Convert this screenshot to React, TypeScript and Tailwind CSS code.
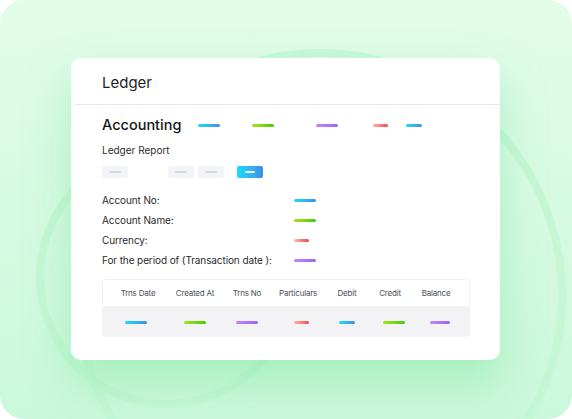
import React from "react";

const G = {
  blue: "bg-gradient-to-r from-[#19dcf7] to-[#3b8ee8]",
  green: "bg-gradient-to-r from-[#a8e21c] to-[#3dcc0c]",
  purple: "bg-gradient-to-r from-[#c783fd] to-[#9866f5]",
  red: "bg-gradient-to-r from-[#fdb3a2] to-[#f0405c]",
};

function Bar({ c, w }: { c: string; w: string }) {
  return <div className={`h-[3px] rounded-full ${c} ${w}`} />;
}

const headers: [string, string][] = [
  ["Trns Date", "w-[56px]"],
  ["Created At", "w-[58px]"],
  ["Trns No", "w-[46px]"],
  ["Particulars", "w-[56px]"],
  ["Debit", "w-[42px]"],
  ["Credit", "w-[44px]"],
  ["Balance", "w-[48px]"],
];

const body: [string, string, string][] = [
  ["w-[52px]", G.blue, "w-[22px]"],
  ["w-[66px]", G.green, "w-[22px]"],
  ["w-[38px]", G.purple, "w-[22px]"],
  ["w-[70px]", G.red, "w-[15px]"],
  ["w-[22px]", G.blue, "w-[16px]"],
  ["w-[72px]", G.green, "w-[22px]"],
  ["w-[20px]", G.purple, "w-[22px]"],
];

export default function App() {
  return (
    <div
      className="relative w-[572px] h-[419px] overflow-hidden rounded-[24px] bg-gradient-to-b from-[#e2fcea] to-[#cbf8da]"
      style={{ fontFamily: "Inter, 'Noto Sans', sans-serif" }}
    >
      {/* decorative rings */}
      <div className="absolute left-[74px] top-[49px] w-[492px] h-[492px] rounded-full border-[8px] border-[#c2f6d2]/80" />
      <div className="absolute left-[36px] top-[146px] w-[262px] h-[262px] rounded-full border-[8px] border-[#c2f6d2]/80" />
      <div className="relative pl-[71px] pt-[58px]">
        <div className="w-[429px] h-[302px] rounded-[10px] bg-white shadow-[0_22px_45px_rgba(90,220,130,0.35)] flex flex-col">
          <div className="h-[46px] flex items-center pl-[31px] pt-[4px] text-[15px] text-[#1f1f1f]">
            Ledger
          </div>
          <div className="ml-[4px] h-px bg-[#e6e7ea]" />
          <div className="pl-[31px] flex flex-col">
            <div className="mt-[8px] h-[24px] flex items-center">
              <div className="w-[96px] text-[14.5px] font-medium text-[#141414]">Accounting</div>
              <Bar c={G.blue} w="w-[22px]" />
              <div className="w-[32px]" />
              <Bar c={G.green} w="w-[22px]" />
              <div className="w-[42px]" />
              <Bar c={G.purple} w="w-[22px]" />
              <div className="w-[35px]" />
              <Bar c={G.red} w="w-[15px]" />
              <div className="w-[18px]" />
              <Bar c={G.blue} w="w-[16px]" />
            </div>
            <div className="mt-[5px] h-[16px] flex items-center text-[10px] text-[#2b2b2b]">
              Ledger Report
            </div>
            <div className="mt-[8px] h-[12px] flex">
              <div className="w-[26px] h-[12px] rounded-[2px] bg-[#f3f4f8] flex items-center justify-center">
                <div className="w-[12px] h-[2px] bg-[#d6d8dd] rounded-full" />
              </div>
              <div className="w-[40px]" />
              <div className="w-[26px] h-[12px] rounded-[2px] bg-[#f3f4f8] flex items-center justify-center">
                <div className="w-[12px] h-[2px] bg-[#d6d8dd] rounded-full" />
              </div>
              <div className="w-[4px]" />
              <div className="w-[26px] h-[12px] rounded-[2px] bg-[#f3f4f8] flex items-center justify-center">
                <div className="w-[12px] h-[2px] bg-[#d6d8dd] rounded-full" />
              </div>
              <div className="w-[13px]" />
              <div className={`w-[26px] h-[12px] rounded-[2px] ${G.blue} flex items-center justify-center`}>
                <div className="w-[10px] h-[2px] bg-white/90 rounded-full" />
              </div>
            </div>
            <div className="mt-[12px] flex flex-col text-[10px] tracking-[-0.1px] text-[#2b2b2b]">
              {[
                ["Account No:", G.blue, "w-[22px]"],
                ["Account Name:", G.green, "w-[22px]"],
                ["Currency:", G.red, "w-[15px]"],
                ["For the period of (Transaction date ):", G.purple, "w-[22px]"],
              ].map(([l, c, w]) => (
                <div key={l} className="h-[20px] flex items-center">
                  <div className="w-[192px]">{l}</div>
                  <Bar c={c} w={w} />
                </div>
              ))}
            </div>
            <div className="mt-[9px] w-[368px] flex flex-col">
              <div className="h-[28px] border border-[#f0f1f5] rounded-t-[4px] flex items-center pl-[7px] text-[8px] tracking-[-0.2px] text-[#4a4f5a]">
                {headers.map(([h, w]) => (
                  <div key={h} className={`${w} text-center`}>
                    {h}
                  </div>
                ))}
              </div>
              <div className="h-[30px] bg-[#f3f3f5] rounded-b-[4px] flex items-center pl-[8px]">
                {body.map(([cw, c, w], i) => (
                  <div key={i} className={`${cw} flex justify-center`}>
                    <Bar c={c} w={w} />
                  </div>
                ))}
              </div>
            </div>
          </div>
        </div>
      </div>
    </div>
  );
}
